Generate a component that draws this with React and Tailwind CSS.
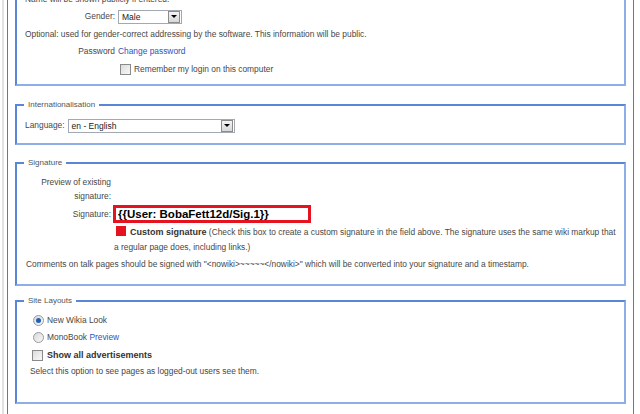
import React from 'react';

// ─── Small form widgets drawn in the old Windows/XP look ─────────────────────
function Select({ value, width }) {
  return (
    <div className={`flex items-center h-[14px] border border-[#a3a9b2] bg-white ${width}`}>
      <span className="flex-1 pl-[3px] text-[8.5px] text-[#222] leading-[12px]">{value}</span>
      <span className="flex items-center justify-center w-[12px] h-[12px] mr-[1px] border border-[#8c8c8c] bg-gradient-to-b from-[#f4f4f4] to-[#d8d8d8]">
        <span className="w-0 h-0 border-l-[3px] border-r-[3px] border-t-[3px] border-l-transparent border-r-transparent border-t-black" />
      </span>
    </div>
  );
}

function Checkbox() {
  return <span className="inline-block w-[11px] h-[11px] border border-[#8a8a8a] bg-gradient-to-br from-[#dcdcdc] to-[#f8f8f8]" />;
}

function Radio({ checked }) {
  return (
    <span className="flex items-center justify-center w-[11px] h-[11px] rounded-full border border-[#9a9a9a] bg-gradient-to-br from-[#d8d8d8] to-[#fafafa]">
      {checked && <span className="w-[5px] h-[5px] rounded-full bg-[#1f5fb8]" />}
    </span>
  );
}

function Fieldset({ legend, className = '', children }) {
  return (
    <fieldset className={`border-2 border-t-[#5a86d8] border-l-[#5a86d8] border-r-[#8eaeea] border-b-[#8eaeea] px-0 ${className}`}>
      <legend className="ml-[7px] px-[4px] text-[8px] leading-[10px] text-[#555]">{legend}</legend>
      {children}
    </fieldset>
  );
}

const link = 'text-[#2b53c0]';

export default function App() {
  return (
    <div className="w-[640px] h-[414px] overflow-hidden bg-white flex font-['Liberation_Sans',Arial,sans-serif] text-[8.4px] leading-[15px] text-[#474747]">
      <div className="ml-[2px] w-[2px] bg-[#e2e2e2]" />
      <div className="ml-[3px] w-[627px] border-x border-[#4a78d2] px-[7px]">

        {/* Profile (top cut off) */}
        <div className="border-2 border-t-0 border-l-[#5a86d8] border-r-[#8eaeea] border-b-[#8eaeea] pb-[7px]">
          <div className="-mt-[8px] h-[15px] pl-[8px]">Name will be shown publicly if entered.</div>
          <div className="mt-[2px] h-[15px] flex items-center">
            <span className="w-[98px] text-right">Gender:</span>
            <span className="ml-[3px]"><Select value="Male" width="w-[64px]" /></span>
          </div>
          <div className="mt-[3px] h-[15px] pl-[8px]">
            Optional: used for gender-correct addressing by the software. This information will be public.
          </div>
          <div className="mt-[2px] h-[15px] flex items-center">
            <span className="w-[98px] text-right">Password</span>
            <span className={`ml-[3px] ${link}`}>Change password</span>
          </div>
          <div className="mt-[3px] h-[15px] flex items-center pl-[103px] gap-[3px]">
            <Checkbox />
            <span>Remember my login on this computer</span>
          </div>
        </div>

        {/* Internationalisation */}
        <Fieldset legend="Internationalisation" className="mt-[14px] pb-[10px]">
          <div className="mt-[8px] h-[15px] flex items-center pl-[8px]">
            <span>Language:</span>
            <span className="ml-[3px]"><Select value="en - English" width="w-[167px]" /></span>
          </div>
        </Fieldset>

        {/* Signature */}
        <Fieldset legend="Signature" className="mt-[13px] pb-[12px]">
          <div className="flex mt-[7px] leading-[14px]">
            <div className="w-[94px] flex justify-end">
              <span className="w-[76px] text-right">Preview of existing signature:</span>
            </div>
          </div>
          <div className="flex items-center mt-[2px]">
            <span className="w-[94px] text-right">Signature:</span>
            <div className="ml-[2px] w-[198px] h-[18px] border-[3px] border-[#e5121f] bg-white flex items-center pl-[2px]">
              <span className="text-[11.5px] font-bold text-black leading-[12px]">{'{{User: BobaFett12d/Sig.1}}'}</span>
            </div>
          </div>
          <div className="ml-[97px] mr-[4px] mt-[2px]">
            <span className="inline-block w-[10px] h-[10px] bg-[#e5121f] align-[-1px] ml-[2px] mr-[4px]" />
            <span className="text-[9px] font-bold text-[#333]">Custom signature</span>{' '}
            (Check this box to create a custom signature in the field above. The signature uses the same wiki markup that a regular page does, including links.)
          </div>
          <div className="pl-[9px] mt-[2px]">
            Comments on talk pages should be signed with "&lt;nowiki&gt;~~~~~&lt;/nowiki&gt;" which will be converted into your signature and a timestamp.
          </div>
        </Fieldset>

        {/* Site Layouts */}
        <Fieldset legend="Site Layouts" className="mt-[10px] pb-[23px]">
          <div className="mt-[6px] h-[17px] flex items-center pl-[16px] gap-[3px]">
            <Radio checked />
            <span>New Wikia Look</span>
          </div>
          <div className="h-[17px] flex items-center pl-[16px] gap-[3px]">
            <Radio />
            <span>MonoBook <span className={link}>Preview</span></span>
          </div>
          <div className="mt-[1px] h-[17px] flex items-center pl-[15px] gap-[4px]">
            <Checkbox />
            <span className="text-[9px] font-bold text-[#333]">Show all advertisements</span>
          </div>
          <div className="h-[15px] pl-[13px]">Select this option to see pages as logged-out users see them.</div>
        </Fieldset>
      </div>
    </div>
  );
}
